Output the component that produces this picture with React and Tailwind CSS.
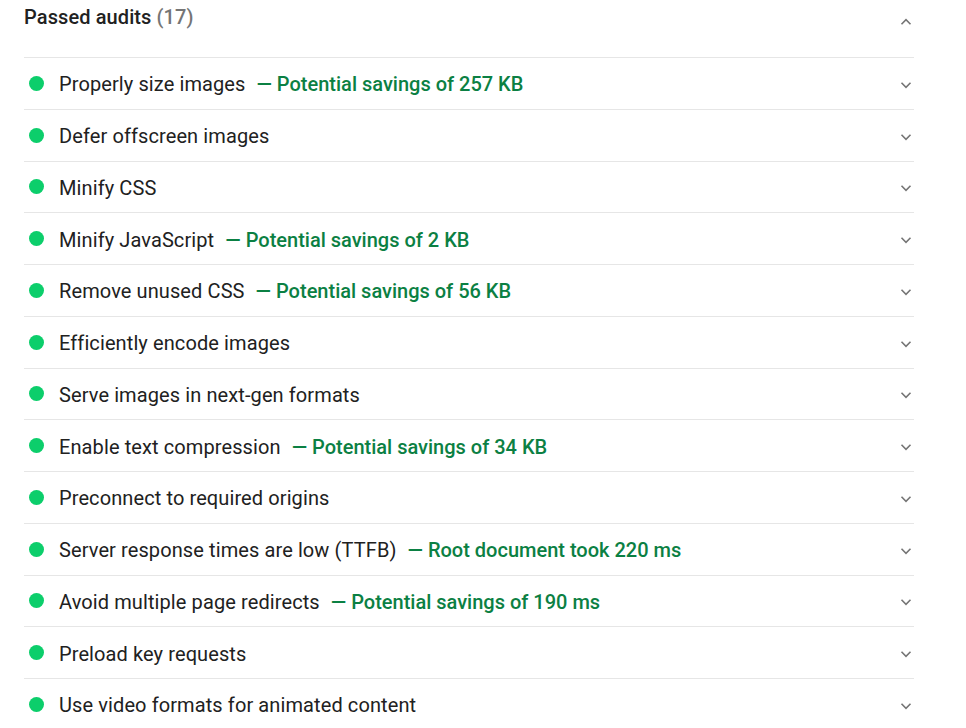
import React from "react";

const audits = [
  { title: "Properly size images", note: "Potential savings of 257 KB" },
  { title: "Defer offscreen images" },
  { title: "Minify CSS" },
  { title: "Minify JavaScript", note: "Potential savings of 2 KB" },
  { title: "Remove unused CSS", note: "Potential savings of 56 KB" },
  { title: "Efficiently encode images" },
  { title: "Serve images in next-gen formats" },
  { title: "Enable text compression", note: "Potential savings of 34 KB" },
  { title: "Preconnect to required origins" },
  { title: "Server response times are low (TTFB)", note: "Root document took 220 ms" },
  { title: "Avoid multiple page redirects", note: "Potential savings of 190 ms" },
  { title: "Preload key requests" },
  { title: "Use video formats for animated content" },
];

function Chevron({ up }) {
  return (
    <svg width="12" height="8" viewBox="0 0 12 8" className={up ? "rotate-180" : ""}>
      <path d="M1.5 1.8l4.5 4.5 4.5-4.5" fill="none" stroke="#757575" strokeWidth="1.6" />
    </svg>
  );
}

export default function App() {
  return (
    <div className="w-[966px] h-[728px] overflow-hidden bg-white font-['Roboto',sans-serif] text-[20px] tracking-[0.1px] text-[#212121]">
      <div className="ml-[24px] w-[890px]">
        <header className="h-[57px] flex items-start justify-between">
          <div className="mt-[4px] leading-[26px] font-medium">
            Passed audits <span className="text-[#757575]">(17)</span>
          </div>
          <div className="mt-[18px] mr-[2px]">
            <Chevron up />
          </div>
        </header>
        {audits.map((a, i) => (
          <div
            key={i}
            className="h-[51.75px] border-t border-[#e6e6e6] flex items-center"
          >
            <span className="ml-[5px] w-[15px] h-[15px] rounded-full bg-[#0cce6b] shrink-0" />
            <span className="ml-[15px] leading-[26px] pt-[2px]">{a.title}</span>
            {a.note && (
              <span className="ml-[11px] leading-[26px] pt-[2px] font-medium tracking-normal text-[#0b8043]">
                — {a.note}
              </span>
            )}
            <span className="ml-auto mr-[2px] mt-[3px] flex">
              <Chevron />
            </span>
          </div>
        ))}
      </div>
    </div>
  );
}
